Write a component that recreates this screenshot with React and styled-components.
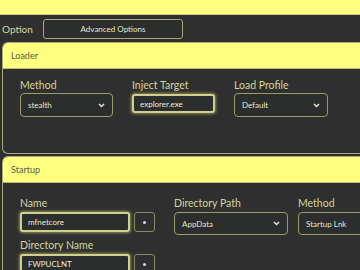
import React from "react";
import styled, { createGlobalStyle } from "styled-components";

const GlobalStyle = createGlobalStyle`
  html, body {
    margin: 0;
    padding: 0;
    background: #2f2f2f;
    font-family: Lato, "Open Sans", sans-serif;
    overflow: hidden;
  }
`;

const Page = styled.div`
  width: 360px;
  height: 270px;
  overflow: hidden;
  background: #2f2f2f;
`;

const TopStrip = styled.div`
  height: 14px;
  background: #ffff80;
  border-bottom: 1px solid #c9c98a;
`;

const Toolbar = styled.div`
  height: 27px;
  display: flex;
  align-items: center;
  padding-left: 2px;
  gap: 12px;
`;

const ToolLabel = styled.span`
  font-size: 10px;
  width: 29px;
  color: #d6d8a0;
`;

const ToolButton = styled.button`
  width: 140px;
  height: 20px;
  padding: 0;
  background: #2c2d2d;
  border: 1px solid #a6a677;
  border-radius: 3px;
  color: #e6e6cc;
  font-family: inherit;
  font-size: 8px;
`;

const Panel = styled.section`
  margin: 0 0 2px 2px;
  border: 1px solid #a8a87a;
  border-right: none;
  border-radius: 6px 0 0 6px;
  overflow: hidden;
  background: #2f2f2f;
`;

const PanelHeader = styled.div`
  height: 25px;
  background: #ffff80;
  border-bottom: 1px solid #b8b87c;
  display: flex;
  align-items: center;
  padding-left: 8px;
  font-size: 9px;
  color: #5a5a48;
`;

const PanelBody = styled.div`
  height: ${(p) => p.$height}px;
  padding: ${(p) => p.$top}px 0 0 17px;
  display: flex;
  gap: 19px;
  box-sizing: border-box;
`;

const Column = styled.div`
  display: flex;
  flex-direction: column;
  width: ${(p) => p.$width}px;
  margin-left: ${(p) => p.$ml ?? 0}px;
  flex-shrink: 0;
`;

const Label = styled.div`
  font-size: 10.5px;
  line-height: 12px;
  color: #d4d69c;
  margin-bottom: ${(p) => p.$gap ?? 3}px;
  white-space: nowrap;
`;

const Select = styled.div`
  height: ${(p) => p.$h}px;
  border: 1.5px solid #9a9a6a;
  border-radius: 4px;
  box-sizing: border-box;
  display: flex;
  align-items: center;
  justify-content: space-between;
  padding: 0 7px;
  font-size: 8px;
  color: #e4e4cc;
  background: #2c2d2d;
`;

const Input = styled.div`
  height: ${(p) => p.$h}px;
  flex: 1;
  border: 2px solid #cfd08c;
  border-radius: 3px;
  box-sizing: border-box;
  display: flex;
  align-items: center;
  padding: 0 6px;
  font-size: 8px;
  color: #ececd6;
  background: #2c2d2d;
  box-shadow: 0 0 3px 1px rgba(214, 214, 120, 0.55);
`;

const Row = styled.div`
  display: flex;
  gap: 4px;
  margin-bottom: ${(p) => p.$mb ?? 0}px;
`;

const DotButton = styled.div`
  width: 21px;
  height: 20px;
  border: 1.5px solid #8a8a62;
  border-radius: 3px;
  box-sizing: border-box;
  display: flex;
  align-items: center;
  justify-content: center;
  &::after {
    content: "";
    width: 3px;
    height: 3px;
    border-radius: 50%;
    background: #d8d8d8;
  }
`;

const Chevron = () => (
  <svg width="7" height="5" viewBox="0 0 7 5">
    <path d="M1 1 L3.5 3.5 L6 1" fill="none" stroke="#e6e6d0" strokeWidth="1.5" />
  </svg>
);

export default function App() {
  return (
    <Page>
      <GlobalStyle />
      <TopStrip />
      <Toolbar>
        <ToolLabel>Option</ToolLabel>
        <ToolButton>Advanced Options</ToolButton>
      </Toolbar>

      <Panel>
        <PanelHeader>Loader</PanelHeader>
        <PanelBody $height={84} $top={10}>
          <Column $width={93}>
            <Label $gap={2}>Method</Label>
            <Select $h={24}>
              stealth <Chevron />
            </Select>
          </Column>
          <Column $width={83}>
            <Label $gap={3}>Inject Target</Label>
            <Row>
              <Input $h={19}>explorer.exe</Input>
            </Row>
          </Column>
          <Column $width={94}>
            <Label $gap={2}>Load Profile</Label>
            <Select $h={24}>
              Default <Chevron />
            </Select>
          </Column>
        </PanelBody>
      </Panel>

      <Panel>
        <PanelHeader>Startup</PanelHeader>
        <PanelBody $height={120} $top={14}>
          <Column $width={135}>
            <Label $gap={3}>Name</Label>
            <Row $mb={7}>
              <Input $h={20}>mfnetcore</Input>
              <DotButton />
            </Row>
            <Label $gap={3}>Directory Name</Label>
            <Row>
              <Input $h={20}>FWPUCLNT</Input>
              <DotButton />
            </Row>
          </Column>
          <Column $width={114}>
            <Label $gap={3}>Directory Path</Label>
            <Select $h={23}>
              AppData <Chevron />
            </Select>
          </Column>
          <Column $width={90} $ml={-9}>
            <Label $gap={3}>Method</Label>
            <Select $h={23}>
              Startup Lnk <Chevron />
            </Select>
          </Column>
        </PanelBody>
      </Panel>
    </Page>
  );
}
